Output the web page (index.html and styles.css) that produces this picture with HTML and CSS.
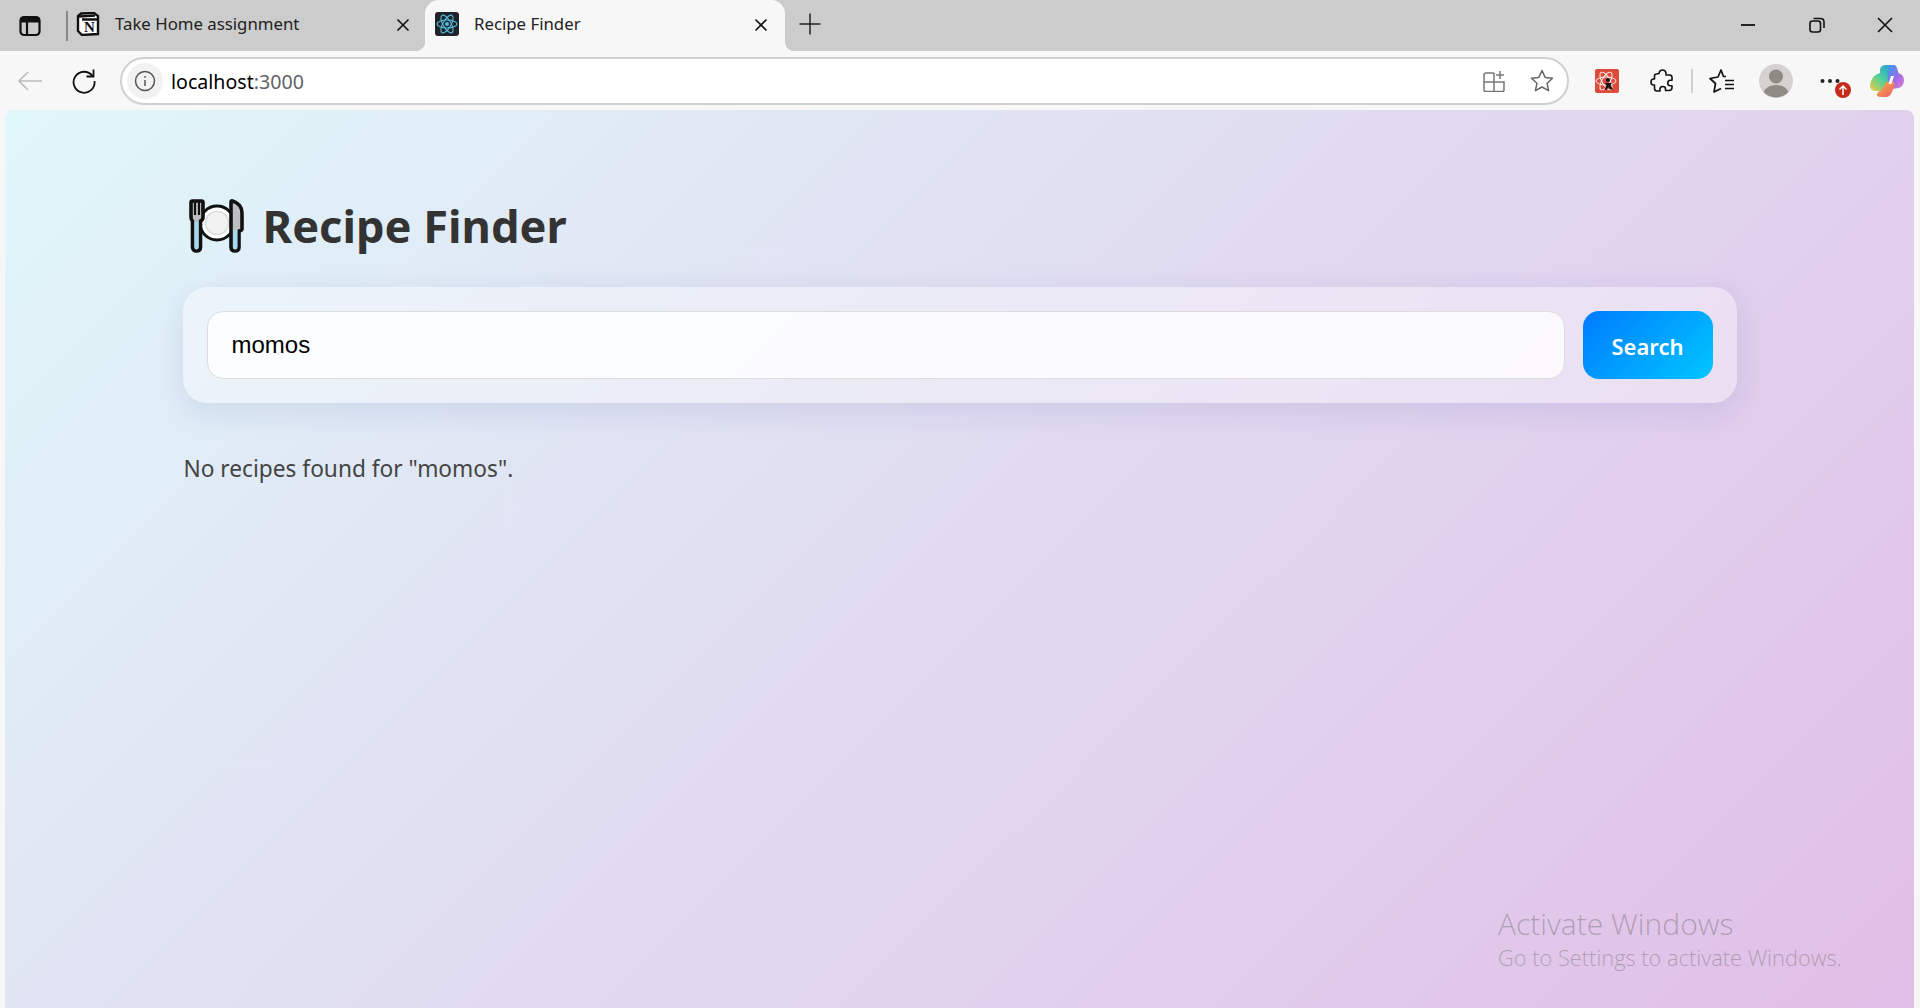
FILE: index.html
```html
<!DOCTYPE html>
<html lang="en">
<head>
    <meta charset="UTF-8">
    <title>Recipe Finder</title>
    <link rel="stylesheet" href="styles.css">
</head>
<body>
    <div class="tabstrip">
        <div class="strip-btn">
            <svg width="22" height="22" viewBox="0 0 22 22" fill="none" stroke="#111" stroke-width="2.200"><rect x="1.500" y="2" width="19" height="18" rx="3.500"/><path d="M1.500 5h19" stroke-width="5"/><path d="M8 7v13"/></svg>
        </div>
        <div class="strip-sep"></div>
        <div class="tab">
            <svg class="tab-icon" width="24" height="24" viewBox="0 0 24 24"><path d="M5 1.500 18 1l4 3v18L6 23l-4-4V4z" fill="#fff" stroke="#111" stroke-width="2.400"/><path d="M3 4.500 19 3.600M6 7.500h15.500" stroke="#111" stroke-width="2.400"/><text x="13.500" y="20" class="notion-n">N</text></svg>
            <span class="tab-title">Take Home assignment</span>
            <svg class="tab-close" width="14" height="14" viewBox="0 0 14 14" stroke="#111" stroke-width="1.600"><path d="M1.500 1.500l11 11M12.500 1.500l-11 11"/></svg>
        </div>
        <div class="tab tab-active">
            <svg class="tab-icon" width="24" height="24" viewBox="0 0 24 24" fill="none" stroke="#53c1de" stroke-width="1.100"><rect width="24" height="24" rx="3" fill="#20232a" stroke="none"/><circle cx="12" cy="12" r="2" fill="#53c1de" stroke="none"/><ellipse cx="12" cy="12" rx="10" ry="4"/><ellipse cx="12" cy="12" rx="10" ry="4" transform="rotate(60 12 12)"/><ellipse cx="12" cy="12" rx="10" ry="4" transform="rotate(120 12 12)"/></svg>
            <span class="tab-title">Recipe Finder</span>
            <svg class="tab-close" width="14" height="14" viewBox="0 0 14 14" stroke="#111" stroke-width="1.600"><path d="M1.500 1.500l11 11M12.500 1.500l-11 11"/></svg>
        </div>
        <div class="new-tab">
            <svg width="22" height="22" viewBox="0 0 22 22" stroke="#222" stroke-width="1.500"><path d="M11 0.500v21M0.500 11h21"/></svg>
        </div>
        <div class="win-controls">
            <svg width="16" height="16" viewBox="0 0 16 16" stroke="#111" stroke-width="1.800"><path d="M1 8h14"/></svg>
            <svg width="16" height="16" viewBox="0 0 16 16" fill="none" stroke="#111" stroke-width="1.600"><rect x="1" y="4" width="10.500" height="11" rx="2.500"/><path d="M4.500 1.500h7q3.500 0 3.500 3.500v6"/></svg>
            <svg width="16" height="16" viewBox="0 0 16 16" stroke="#111" stroke-width="1.600"><path d="M1 1l14 14M15 1L1 15"/></svg>
        </div>
    </div>

    <div class="toolbar">
        <div class="tool tool-first">
            <svg width="26" height="22" viewBox="0 0 26 22" fill="none" stroke="#bdbdbd" stroke-width="1.600"><path d="M25 11H2M11 2l-9 9 9 9"/></svg>
        </div>
        <div class="tool tool-reload">
            <svg width="26" height="26" viewBox="0 0 26 26" fill="none" stroke="#111" stroke-width="1.800"><path d="M21.500 8A10.500 10.500 0 1 0 23.500 13"/><path d="M22.500 1.500V8.500H15.500"/></svg>
        </div>
        <div class="address">
            <div class="site-info">
                <svg width="22" height="22" viewBox="0 0 22 22" fill="none" stroke="#555" stroke-width="1.500"><circle cx="11" cy="11" r="9.500"/><path d="M11 10v6M11 6v1.800"/></svg>
            </div>
            <div class="url">localhost<span class="url-port">:3000</span></div>
            <div class="address-end">
                <svg width="22" height="22" viewBox="0 0 22 22" fill="none" stroke="#777" stroke-width="1.500"><path d="M11 3H3q-2 0-2 2v15q0 1.500 2 1.500h16q2 0 2-1.500v-8H1M11 3v18"/><path d="M17 1v8M13 5h8"/></svg>
                <svg width="24" height="24" viewBox="0 0 24 24" fill="none" stroke="#666" stroke-width="1.500"><path d="M12 1.500l3.200 6.900 7.300.9-5.400 5 1.500 7.400L12 18l-6.600 3.700 1.500-7.400-5.400-5 7.300-.9z" stroke-linejoin="round"/></svg>
            </div>
        </div>
        <div class="tool tool-ext">
            <svg width="24" height="24" viewBox="0 0 24 24" fill="none"><rect width="24" height="24" rx="2" fill="#dc4b3c"/><g stroke="#fff" stroke-width=".9"><ellipse cx="11" cy="12" rx="10" ry="4"/><ellipse cx="11" cy="12" rx="10" ry="4" transform="rotate(60 11 12)"/><ellipse cx="11" cy="12" rx="10" ry="4" transform="rotate(120 11 12)"/></g><circle cx="13" cy="11" r="2" fill="#111"/><path d="M10 14h7l-1.500 2.500 2.500 4h-2.500L13.500 18 12 20.500H9.500l2-4z" fill="#111"/></svg>
        </div>
        <div class="tool tool-puzzle">
            <svg width="24" height="24" viewBox="0 0 24 24" fill="none" stroke="#111" stroke-width="1.600" stroke-linejoin="round"><path d="M9 4.500Q9.500 1 12.500 1T16 4.500V6h3.500q2.500 0 2.500 2.500v2.700h-1.500q-2.800 0-2.800 2.800t2.800 2.800H22v1.700q0 3-3 3h-3.500v-1.500q0-2.500-2.700-2.500t-2.800 2.500V22H7q-2.500 0-2.500-2.500V16H3.500Q1 16 1 13t2.500-3h1V7Q4.500 5 6.500 5z"/></svg>
        </div>
        <div class="tool-sep"></div>
        <div class="tool tool-fav">
            <svg width="26" height="25" viewBox="0 0 26 25" fill="none" stroke="#111" stroke-width="1.700" stroke-linejoin="round"><path d="M17 7.500h-2.500L12 1 9 8 1 9.500l5.500 5L5 23l7-3.500"/><path d="M16 11.500h9M16 15.500h9M16 19.500h9" stroke-width="1.500"/></svg>
        </div>
        <div class="tool">
            <svg width="34" height="34" viewBox="0 0 34 34"><circle cx="17" cy="17" r="17" fill="#d4d3cf"/><circle cx="17" cy="12.500" r="7" fill="#8e8a86"/><path d="M4.500 28Q8 21 17 21t12.500 7A17 17 0 0 1 4.500 28z" fill="#8e8a86"/></svg>
        </div>
        <div class="tool tool-more">
            <svg width="20" height="4" viewBox="0 0 20 4" fill="#222"><circle cx="2.500" cy="2" r="2"/><circle cx="10" cy="2" r="2"/><circle cx="17.500" cy="2" r="2"/></svg>
            <span class="update-badge">
                <svg width="10" height="10" viewBox="0 0 10 10" fill="none" stroke="#fff" stroke-width="1.500"><path d="M5 10V1M1.500 4.500 5 1l3.500 3.500"/></svg>
            </span>
        </div>
        <div class="tool tool-copilot">
            <svg width="34" height="32" viewBox="0 0 34 32">
                <defs>
                    <linearGradient id="copA" x1="0" y1="1" x2="1" y2="0"><stop offset="0" stop-color="#f6c945"/><stop offset=".45" stop-color="#4fd29a"/><stop offset="1" stop-color="#1f8fe8"/></linearGradient>
                    <linearGradient id="copB" x1="0" y1="0" x2="1" y2="1"><stop offset="0" stop-color="#2f9bf0"/><stop offset=".6" stop-color="#a56ce6"/><stop offset="1" stop-color="#e07fd0"/></linearGradient>
                    <linearGradient id="copC" x1="0" y1="0" x2="1" y2="1"><stop offset="0" stop-color="#f7b23c"/><stop offset="1" stop-color="#ee5a6c"/></linearGradient>
                </defs>
                <path d="M10 4Q11 0 16 0h8q2 0 1 3l-5 15-4 8H6Q0 26 0 21q0-2 1-5Q3 10 10 8z" fill="url(#copA)"/>
                <path d="M19 0h4q3 0 4 3l1.500 5q5.500 2 5.500 7 0 6-5 8l-7 1q-4 0-5-4z" fill="url(#copB)"/>
                <path d="M11 26l5-9q3-1 7 0 2 0 2 2l-3 8q-2 5-6 5H11q-5 0-4-3t4-3z" fill="url(#copC)"/>
                <path d="M21 11h3l-2.500 8h-3z" fill="#fff"/>
            </svg>
        </div>
    </div>

    <div class="page">
        <div class="app">
            <div class="app-header">
                <svg class="logo" width="56" height="54" viewBox="0 0 56 54">
                    <circle cx="29" cy="24" r="17" fill="#fff" stroke="#111" stroke-width="3"/>
                    <circle cx="29" cy="24" r="11.500" fill="#f2f2f2" stroke="#dcdcdc" stroke-width="1.500"/>
                    <path d="M3 3.500Q3 2 4.500 2h9Q15 2 15 3.500V18q0 3-2.500 4v26q0 4-4 4t-4-4V22Q3 21 3 18z" fill="#bcbec0" stroke="#111" stroke-width="3.600" stroke-linejoin="round"/>
                    <path d="M6.500 22.500h4V48q0 2.500-2 2.500t-2-2.500z" fill="#a8d8f0"/>
                    <path d="M7 3v13M11 3v13" stroke="#111" stroke-width="2.200"/>
                    <path d="M43 3Q43 1.500 44.500 2 54 5 54 14v16q0 1.500-3 2v16q0 4-4 4t-4-4z" fill="#bcbec0" stroke="#111" stroke-width="3.600" stroke-linejoin="round"/>
                    <path d="M45 31h4.500v17q0 2.500-2.200 2.500T45 48z" fill="#a8d8f0"/>
                </svg>
                <h1 class="app-title">Recipe Finder</h1>
            </div>
            <div class="search-card">
                <input class="search-input" type="text" value="momos">
                <button class="search-btn">Search</button>
            </div>
            <p class="no-results">No recipes found for "momos".</p>
        </div>
        <div class="activate">
            <div class="activate-title">Activate Windows</div>
            <div class="activate-sub">Go to Settings to activate Windows.</div>
        </div>
    </div>
</body>
</html>
```

FILE: styles.css
```css
*{
    padding: 0;
    margin: 0;
    box-sizing: border-box;
}
body{
    height: 1008px;
    overflow: hidden;
    background-color: #f7f7f7;
    font-family: "Noto Sans", "Open Sans", sans-serif;
    display: flex;
    flex-direction: column;
}

/* tabs */
.tabstrip{
    height: 51px;
    flex-shrink: 0;
    background-color: #cccccc;
    display: flex;
    align-items: flex-start;
    color: #222222;
}
.strip-btn{
    width: 60px;
    height: 51px;
    display: flex;
    align-items: center;
    justify-content: center;
}
.strip-sep{
    width: 2px;
    height: 30px;
    margin: 11px 0 0 6px;
    background-color: #888888;
}
.tab{
    width: 349px;
    height: 51px;
    margin-left: 8px;
    padding: 0 15px 4px 0;
    display: flex;
    align-items: center;
    position: relative;
    font-size: 16.800px;
}
.tab-icon{
    flex-shrink: 0;
    margin-right: 15px;
}
.notion-n{
    font-family: "Liberation Serif", serif;
    font-size: 15px;
    font-weight: bold;
    text-anchor: middle;
    fill: #111111;
}
.tab-title{
    flex: 1;
    white-space: nowrap;
}
.tab-active{
    width: 360px;
    height: 57px;
    margin-left: 0;
    padding: 0 17px 10px 10px;
    background-color: #f7f7f7;
    border-radius: 14px 14px 0 0;
}
.tab-close{
    margin-top: 2px;
}
.tab-active:before,
.tab-active:after{
    content: "";
    position: absolute;
    top: 41px;
    width: 10px;
    height: 10px;
}
.tab-active:before{
    left: -10px;
    background: radial-gradient(circle at 0 0, #cccccc 10px, #f7f7f7 10.500px);
}
.tab-active:after{
    right: -10px;
    background: radial-gradient(circle at 100% 0, #cccccc 10px, #f7f7f7 10.500px);
}
.new-tab{
    width: 22px;
    height: 22px;
    margin: 13px 0 0 14px;
}
.win-controls{
    margin-left: auto;
    width: 180px;
    padding: 17px 27px 0 0;
    display: flex;
    justify-content: space-between;
}

/* toolbar */
.toolbar{
    height: 59px;
    flex-shrink: 0;
    padding: 6px 13px 5px 0;
    display: flex;
    align-items: center;
}
.tool{
    width: 40px;
    height: 40px;
    margin-left: 14px;
    flex-shrink: 0;
    display: flex;
    align-items: center;
    justify-content: center;
    position: relative;
}
.tool-first{
    margin-left: 10px;
}
.tool-ext{
    margin-left: 18px;
}
.tool-puzzle{
    margin-left: 15px;
}
.tool-fav{
    margin-left: 9px;
}
.tool-copilot{
    margin-left: 17px;
}
.tool-sep{
    width: 2px;
    height: 24px;
    margin-left: 9px;
    background-color: #cfcfcf;
}
.update-badge{
    position: absolute;
    left: 25px;
    top: 21px;
    width: 16px;
    height: 16px;
    border-radius: 50%;
    background-color: #c42b1c;
    display: flex;
    align-items: center;
    justify-content: center;
}
.address{
    flex: 1;
    height: 48px;
    margin-left: 16px;
    padding: 0 13px 0 5px;
    background-color: #ffffff;
    border: 2px solid #d0d0d0;
    border-radius: 24px;
    display: flex;
    align-items: center;
}
.site-info{
    width: 36px;
    height: 36px;
    border-radius: 50%;
    background-color: #f2f2f2;
    display: flex;
    align-items: center;
    justify-content: center;
}
.url{
    flex: 1;
    margin-left: 8px;
    font-size: 19.600px;
    color: #000000;
}
.url-port{
    color: #5f6368;
}
.address-end{
    width: 71px;
    display: flex;
    align-items: center;
    justify-content: space-between;
}

/* page */
.page{
    flex: 1;
    margin: 0 6px 0 5px;
    border-radius: 8px 8px 0 0;
    background: linear-gradient(135deg, #e0f7fa, #e1bee7);
    position: relative;
    overflow: hidden;
}
.app{
    width: 1554px;
    margin: 0 auto;
    padding-top: 89px;
}
.app-header{
    display: flex;
    align-items: center;
    gap: 19px;
    height: 54px;
    margin-left: 5px;
}
.app-title{
    font-size: 45.200px;
    font-weight: 700;
    color: #333333;
    line-height: 52px;
}
.search-card{
    margin-top: 34px;
    height: 116px;
    padding: 24px;
    display: flex;
    gap: 18px;
    background-color: rgba(255, 255, 255, 0.35);
    border-radius: 24px;
    box-shadow: 0 8px 32px rgba(31, 38, 135, 0.1);
}
.search-input{
    flex: 1;
    height: 68px;
    padding: 0 24px;
    font-family: "Liberation Sans", Arial, sans-serif;
    font-size: 24px;
    color: #000000;
    background-color: rgba(255, 255, 255, 0.8);
    border: 1px solid #dddddd;
    border-radius: 16px;
    outline: none;
}
.search-btn{
    width: 130px;
    height: 68px;
    padding-top: 2px;
    font-family: "Noto Sans", sans-serif;
    font-size: 22px;
    font-weight: 600;
    color: #ffffff;
    background: linear-gradient(135deg, #007bff, #00c6ff);
    border: none;
    border-radius: 16px;
}
.no-results{
    margin-top: 50px;
    padding-left: 1px;
    font-size: 22.700px;
    line-height: 32px;
    color: #444444;
}
.activate{
    position: absolute;
    left: 1493px;
    top: 794px;
    font-family: "Open Sans", sans-serif;
    font-weight: 300;
    color: rgba(110, 110, 110, 0.45);
}
.activate-title{
    font-size: 30px;
    line-height: 40px;
}
.activate-sub{
    font-size: 21.800px;
    line-height: 28px;
}
```
